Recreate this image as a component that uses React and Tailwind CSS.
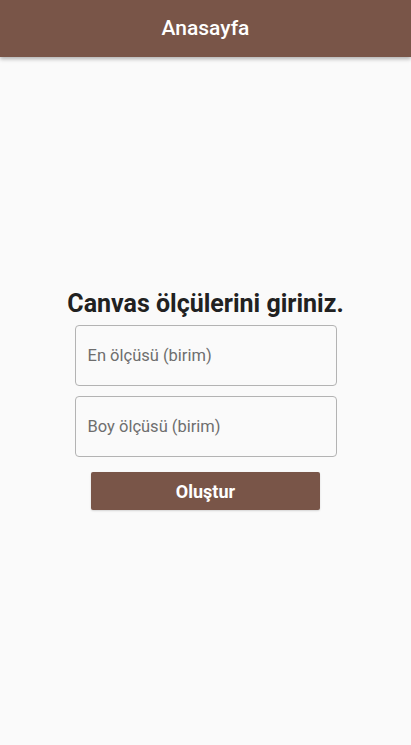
import { useState } from "react";

export default function App() {
  const [width, setWidth] = useState("");
  const [height, setHeight] = useState("");

  return (
    <div className="flex h-[745px] w-[411px] flex-col bg-[#fafafa] font-['Roboto',sans-serif]">
      <header className="relative z-10 flex h-[57px] shrink-0 items-center justify-center bg-[#795548] shadow-[0_2px_4px_rgba(0,0,0,0.3)]">
        <h1 className="text-[21px] font-medium text-white">Anasayfa</h1>
      </header>

      <main className="flex flex-1 flex-col items-center justify-center pb-[3px]">
        <h2 className="text-[25px] font-bold leading-[30px] text-[#212121]">
          Canvas ölçülerini giriniz.
        </h2>

        <input
          value={width}
          onChange={(e) => setWidth(e.target.value)}
          placeholder="En ölçüsü (birim)"
          className="mt-[6px] h-[61px] w-[262px] rounded-[4px] border border-[#b3b3b3] bg-transparent px-3 text-[16.5px] text-[#212121] outline-none placeholder:text-[#6e6e6e]"
        />
        <input
          value={height}
          onChange={(e) => setHeight(e.target.value)}
          placeholder="Boy ölçüsü (birim)"
          className="mt-[10px] h-[61px] w-[262px] rounded-[4px] border border-[#b3b3b3] bg-transparent px-3 text-[16.5px] text-[#212121] outline-none placeholder:text-[#6e6e6e]"
        />

        <button
          type="button"
          className="mt-[15px] h-[38px] w-[229px] rounded-[2px] bg-[#795548] text-[18px] font-bold text-white shadow-[0_1px_2px_rgba(0,0,0,0.15)]"
        >
          Oluştur
        </button>
      </main>
    </div>
  );
}
